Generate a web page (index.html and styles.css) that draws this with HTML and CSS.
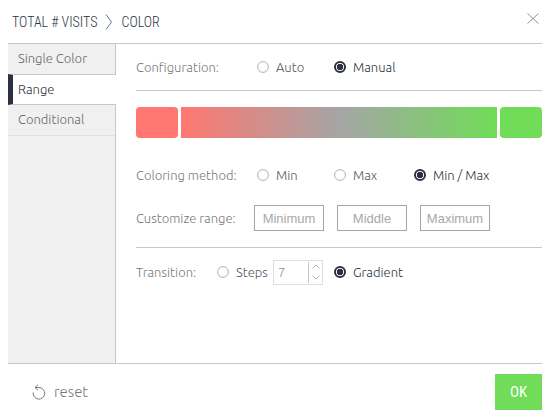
FILE: index.html
```html
<!DOCTYPE html>
<html lang="en">
<head>
<meta charset="utf-8">
<meta name="viewport" content="width=device-width, initial-scale=1">
<title>Color settings</title>
<link rel="stylesheet" href="styles.css">
</head>
<body>
<form class="dialog">
  <header class="header">
    <h1 class="title">
      <span>TOTAL # VISITS</span>
      <svg class="chevron" viewBox="0 0 8 16" aria-hidden="true"><path d="M1 0.5L6.500 8L1 15.500"/></svg>
      <span>COLOR</span>
    </h1>
    <button class="close" type="button" aria-label="Close">
      <svg viewBox="0 0 12 12" aria-hidden="true"><path d="M.5 .5L11.500 10.500M11.500 .5L.5 10.500"/></svg>
    </button>
  </header>

  <div class="body">
    <nav class="tabs">
      <a class="tab" href="#single">Single Color</a>
      <a class="tab active" href="#range" aria-current="page">Range</a>
      <a class="tab" href="#conditional">Conditional</a>
    </nav>

    <main class="panel">
      <div class="row configuration" role="radiogroup" aria-labelledby="configuration">
        <span class="caption" id="configuration">Configuration:</span>
        <label class="option"><input type="radio" name="configuration">Auto</label>
        <label class="option"><input type="radio" name="configuration" checked>Manual</label>
      </div>

      <div class="scale">
        <span class="swatch low"></span>
        <span class="gradient"></span>
        <span class="swatch high"></span>
      </div>

      <div class="row method" role="radiogroup" aria-labelledby="method">
        <span class="caption" id="method">Coloring method:</span>
        <label class="option"><input type="radio" name="method">Min</label>
        <label class="option"><input type="radio" name="method">Max</label>
        <label class="option"><input type="radio" name="method" checked>Min / Max</label>
      </div>

      <div class="row customize" role="group" aria-labelledby="customize">
        <span class="caption" id="customize">Customize range:</span>
        <input class="bound" type="text" placeholder="Minimum" aria-label="Minimum">
        <input class="bound" type="text" placeholder="Middle" aria-label="Middle">
        <input class="bound" type="text" placeholder="Maximum" aria-label="Maximum">
      </div>

      <div class="row transition" role="radiogroup" aria-labelledby="transition">
        <span class="caption" id="transition">Transition:</span>
        <label class="option"><input type="radio" name="transition">Steps</label>
        <div class="stepper">
          <input class="count" type="text" inputmode="numeric" value="7" aria-label="Number of steps">
          <div class="arrows">
            <button type="button" aria-label="Increase"><svg viewBox="0 0 8 5" aria-hidden="true"><path d="M.5 4.500L4 1L7.500 4.500"/></svg></button>
            <button type="button" aria-label="Decrease"><svg viewBox="0 0 8 5" aria-hidden="true"><path d="M.5 .5L4 4L7.500 .5"/></svg></button>
          </div>
        </div>
        <label class="option"><input type="radio" name="transition" checked>Gradient</label>
      </div>
    </main>
  </div>

  <footer class="footer">
    <button class="reset" type="reset">
      <svg viewBox="0 0 14 16" aria-hidden="true"><path d="M1.200 8.500A5.800 5.800 0 1 0 7 3.500H3M6 .8L3 3.500L6 6.200"/></svg>
      reset
    </button>
    <button class="ok" type="submit">OK</button>
  </footer>
</form>
</body>
</html>
```
FILE: styles.css
```css
* {
  box-sizing: border-box;
}

:root {
  --line: #c8c8c8;
  --ink: #2b3142;
  --green: #70dc58;
  --red: #ff7770;
  --text: "Ubuntu", "Open Sans", "Noto Sans", sans-serif;
  --condensed: "Roboto Condensed", "Roboto", sans-serif;
}

body {
  margin: 0;
  background: #fff;
  color: #55565c;
  font: 300 13px/20px var(--text);
}

button,
input {
  margin: 0;
  font: inherit;
}

button {
  padding: 0;
  border: 0;
  background: none;
  color: inherit;
  cursor: pointer;
}

svg {
  display: block;
  fill: none;
  stroke: currentColor;
}

.dialog {
  display: flex;
  flex-direction: column;
  min-height: 100vh;
  padding: 0 10px 8px 8px;
}

.header {
  display: flex;
  justify-content: space-between;
  height: 44px;
  padding: 12px 3px 0 4px;
  border-bottom: 1px solid var(--line);
}

.title {
  display: flex;
  align-items: center;
  gap: 8px;
  height: 20px;
  margin: 0;
  color: var(--ink);
  font: 300 14px/20px var(--condensed);
}

.chevron {
  width: 8px;
  height: 16px;
  stroke: #6d7688;
}

.close {
  align-self: flex-start;
  padding-top: 1px;
  color: #929397;
}

.close svg {
  width: 12px;
  height: 12px;
}

.body {
  display: flex;
  flex: 1;
  border-bottom: 1px solid var(--line);
}

.tabs {
  flex: none;
  width: 108px;
  border-right: 1px solid var(--line);
  background: #f0f0f0;
}

.tab {
  display: block;
  height: 31px;
  padding: 4px 10px;
  border-bottom: 1px solid #e0e0e0;
  color: #66676b;
  text-decoration: none;
}

.tab.active {
  margin: -1px -1px 0 0;
  padding-left: 5px;
  border: solid var(--line);
  border-width: 1px 0;
  border-left: 5px solid var(--ink);
  background: #fff;
  color: var(--ink);
}

.panel {
  flex: 1;
  padding-left: 20px;
}

.row {
  display: grid;
  align-items: center;
}

.configuration {
  grid-template-columns: 121px 77px auto;
  height: 47px;
  border-bottom: 1px solid var(--line);
}

.method {
  grid-template-columns: 121px 77px 80px auto;
  height: 30px;
}

.customize {
  grid-template-columns: 105px 70px 70px 70px;
  column-gap: 13px;
  height: 58px;
  padding-bottom: 2px;
  border-bottom: 1px solid var(--line);
}

.transition {
  grid-template-columns: 81px 56px 61px auto;
  height: 48px;
}

.caption {
  color: #77787c;
  white-space: nowrap;
}

.option {
  display: flex;
  align-items: center;
  gap: 7px;
  white-space: nowrap;
}

.option:has(:checked) {
  color: var(--ink);
}

.option input {
  flex: none;
  width: 12px;
  height: 12px;
  border: 1px solid #bcbcbc;
  border-radius: 50%;
  background: #fff;
  box-shadow: inset 0 0 1px #bcbcbc;
  appearance: none;
}

.option input:checked {
  border: 2px solid var(--ink);
  background: radial-gradient(circle, var(--ink) 3px, #fff 3px);
  box-shadow: none;
}

.scale {
  display: flex;
  gap: 3px;
  height: 31px;
  margin: 16px 0 22px;
}

.swatch {
  width: 42px;
  border-radius: 4px;
}

.low {
  background: var(--red);
}

.high {
  background: var(--green);
}

.gradient {
  flex: 1;
  background: linear-gradient(to right, var(--red), #a5a5a5 50%, var(--green));
}

.bound {
  width: 100%;
  height: 26px;
  padding: 2px 0 0;
  border: 1px solid #a6a6a6;
  background: #fff;
  font: 400 13px/20px "Liberation Sans", sans-serif;
  text-align: center;
}

.bound::placeholder {
  color: #a8a8a8;
  opacity: 1;
}

.stepper {
  display: flex;
  align-items: center;
  width: 50px;
  height: 25px;
  border: 1px solid #dedede;
}

.count {
  width: 35px;
  height: 21px;
  padding: 0 4px;
  border: 0;
  border-right: 1px solid var(--line);
  background: none;
  color: #909090;
}

.arrows {
  display: grid;
  flex: 1;
  gap: 6px;
  justify-items: center;
  color: #b8b8b8;
}

.arrows svg {
  width: 8px;
  height: 5px;
}

.footer {
  display: flex;
  align-items: center;
  justify-content: space-between;
  padding-top: 10px;
}

.reset {
  display: flex;
  align-items: center;
  gap: 8px;
  padding-left: 24px;
  color: #77787c;
  font-size: 15px;
}

.reset svg {
  width: 14px;
  height: 16px;
}

.ok {
  width: 47px;
  height: 36px;
  background: var(--green);
  color: #fff;
  font: 400 15px/20px var(--condensed);
}
```
